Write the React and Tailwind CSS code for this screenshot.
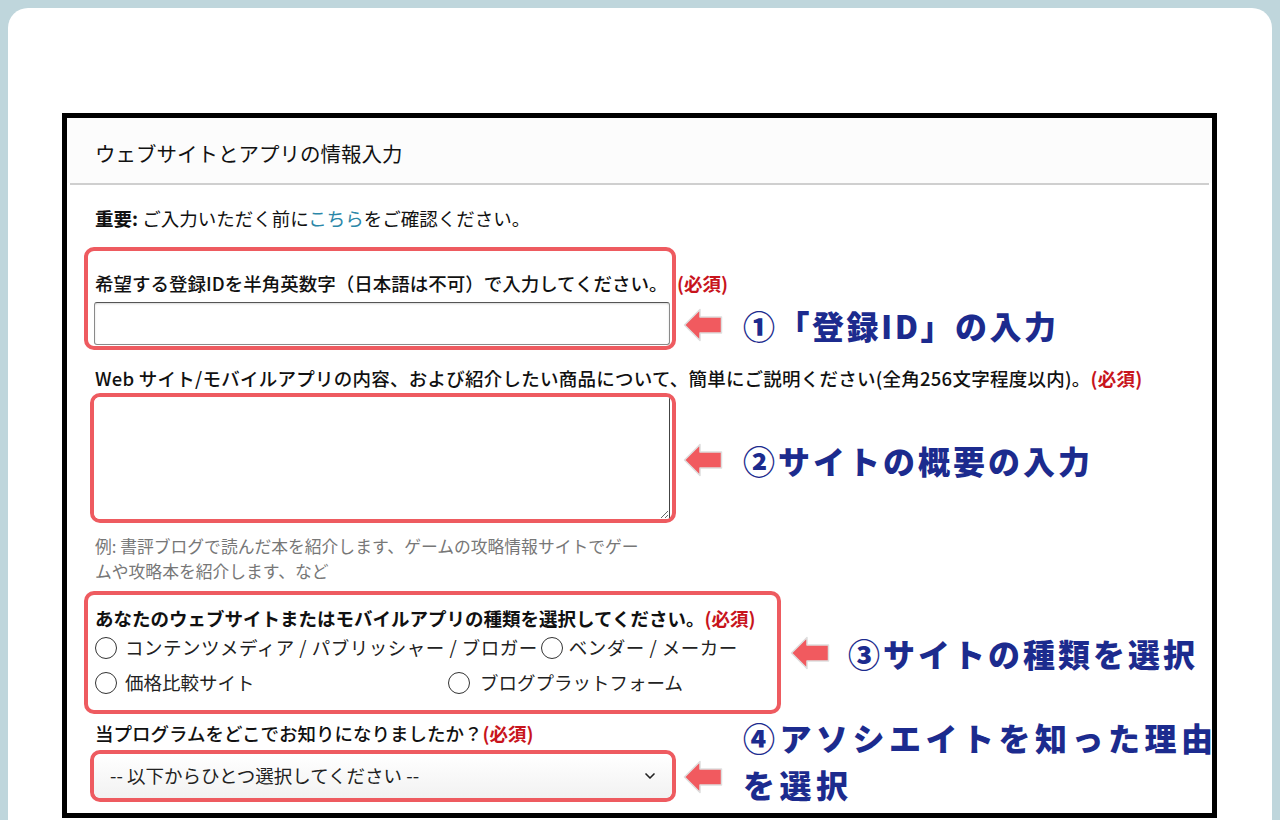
import React from 'react';
import { ChevronDown } from 'lucide-react';

const FONT = "font-['Noto_Sans_CJK_JP','Noto_Sans',sans-serif]";

const Arrow = () => (
  <svg width="40" height="34" viewBox="0 0 40 34" className="shrink-0">
    <path
      d="M1.5 17 L17 1.5 L17 9 L38.5 9 L38.5 25 L17 25 L17 32.5 Z"
      fill="#f15a5f"
      stroke="#dedede"
      strokeWidth="1.5"
      strokeLinejoin="round"
    />
  </svg>
);

const Required = () => <span className="font-bold text-[#c8141c]">(必須)</span>;

const Note = ({ children, className = '' }) => (
  <div
    className={`font-black text-[32px] text-[#1c2b8e] whitespace-nowrap [text-shadow:0_0_3px_#fff] ${className}`}
  >
    {children}
  </div>
);

const Radio = ({ label, className = '' }) => (
  <div className={`flex items-center gap-2 ${className}`}>
    <span className="w-[22px] h-[22px] rounded-full border-[1.5px] border-[#333] bg-white shrink-0" />
    <span>{label}</span>
  </div>
);

export default function App() {
  return (
    <div className={`h-[820px] overflow-hidden bg-[#bfd6dc] pt-2 px-2 ${FONT}`}>
      <div className="h-full bg-white rounded-t-[20px] pt-[105px] pl-[54px] pr-[55px]">
        <div className="h-[705px] border-[5px] border-black bg-white overflow-hidden">
          {/* header */}
          <div className="h-[65px] bg-[#fcfcfc] flex items-center pl-[28px] pt-[6px]">
            <h1 className="text-[20.5px] text-[#111]">ウェブサイトとアプリの情報入力</h1>
          </div>
          <div className="mx-[3px] h-[2px] bg-[#cfcfcf]" />

          {/* body */}
          <div className="pl-[17px] pt-[20px] text-[18.5px] text-[#111]">
            <p className="ml-[11px] leading-[26px]">
              <span className="font-bold">重要:</span> ご入力いただく前に
              <span className="text-[#2b87a8]">こちら</span>をご確認ください。
            </p>

            {/* 1 */}
            <div className="flex items-start mt-[16px]">
              <div className="w-[592px] shrink-0 border-4 border-[#ee5b60] rounded-[10px] pt-[19px] pl-[6px] pr-[2px] pb-[1px]">
                <p className="leading-[26px] font-medium whitespace-nowrap pl-[1px]">
                  希望する登録IDを半角英数字（日本語は不可）で入力してください。
                </p>
                <div className="mt-[6px] h-[43px] border border-[#8a8a8a] border-t-[#555] rounded-[3px] bg-white shadow-[inset_0_1px_2px_rgba(0,0,0,0.15)]" />
              </div>
              <div className="ml-px mt-[23px] leading-[26px] whitespace-nowrap">
                <Required />
              </div>
            </div>
            {/* annotation 1 sits on the same line as the input */}
            <div className="flex items-center -mt-[45px] ml-[599px] h-[40px]">
              <Arrow />
              <Note className="ml-[20px] leading-[40px] tracking-[2.5px]">①「登録ID」の入力</Note>
            </div>

            {/* 2 */}
            <p className="ml-[11px] mt-[20px] leading-[26px] font-medium whitespace-nowrap tracking-[0.25px]">
              Web サイト/モバイルアプリの内容、および紹介したい商品について、簡単にご説明ください(全角256文字程度以内)。
              <Required />
            </p>
            <div className="flex items-center mt-[2px]">
              <div className="ml-[6px] w-[586px] h-[130px] shrink-0 border-4 border-[#ee5b60] rounded-[10px] overflow-hidden">
                <textarea className="block w-[576px] h-[122px] border-r border-[#444] bg-white outline-none resize-y" />
              </div>
              <div className="flex items-center ml-[7px] pt-[4px]">
                <Arrow />
                <Note className="ml-[20px] leading-[40px] tracking-[3px]">②サイトの概要の入力</Note>
              </div>
            </div>

            <p className="ml-[11px] mt-[11px] text-[16.8px] leading-[25px] text-[#777]">
              例: 書評ブログで読んだ本を紹介します、ゲームの攻略情報サイトでゲー
              <br />
              ムや攻略本を紹介します、など
            </p>

            {/* 3 */}
            <div className="flex items-center mt-[7px]">
              <div className="w-[697px] shrink-0 border-4 border-[#ee5b60] rounded-[10px] pt-[10px] pl-[7px] pb-[10px] text-[#222]">
                <p className="leading-[26px] font-bold text-[#111] whitespace-nowrap">
                  あなたのウェブサイトまたはモバイルアプリの種類を選択してください。
                  <Required />
                </p>
                <div className="flex items-center h-[34px] whitespace-nowrap">
                  <Radio label="コンテンツメディア / パブリッシャー / ブロガー" className="tracking-[0.5px]" />
                  <Radio label="ベンダー / メーカー" className="ml-[3px] gap-[6px] tracking-[0.5px]" />
                </div>
                <div className="flex items-center h-[35px] whitespace-nowrap">
                  <Radio label="価格比較サイト" className="w-[353px]" />
                  <Radio label="ブログプラットフォーム" className="gap-[10px]" />
                </div>
              </div>
              <div className="flex items-center ml-[9px]">
                <Arrow />
                <Note className="ml-[18px] leading-[40px] tracking-[3px]">③サイトの種類を選択</Note>
              </div>
            </div>

            {/* 4 */}
            <div className="flex items-start">
              <div className="ml-[6px] w-[586px] shrink-0">
                <p className="mt-[6px] pl-[5px] leading-[26px] font-medium whitespace-nowrap">
                  当プログラムをどこでお知りになりましたか？<Required />
                </p>
                <div className="mt-[4px] h-[52px] border-4 border-[#ee5b60] rounded-[10px] overflow-hidden">
                  <div className="h-full flex items-center justify-between pl-[16px] pr-[14px] bg-gradient-to-b from-white to-[#f2f2f2] rounded-[6px] shadow-[0_2px_3px_rgba(0,0,0,0.18)]">
                    <span className="text-[#222]">-- 以下からひとつ選択してください --</span>
                    <ChevronDown size={16} strokeWidth={2.5} className="text-[#222]" />
                  </div>
                </div>
              </div>
              <div className="ml-[7px] mt-[46px]">
                <Arrow />
              </div>
              <Note className="ml-[20px] leading-[47px] tracking-[4.5px]">
                ④アソシエイトを知った理由
                <br />
                を選択
              </Note>
            </div>
          </div>
        </div>
      </div>
    </div>
  );
}
